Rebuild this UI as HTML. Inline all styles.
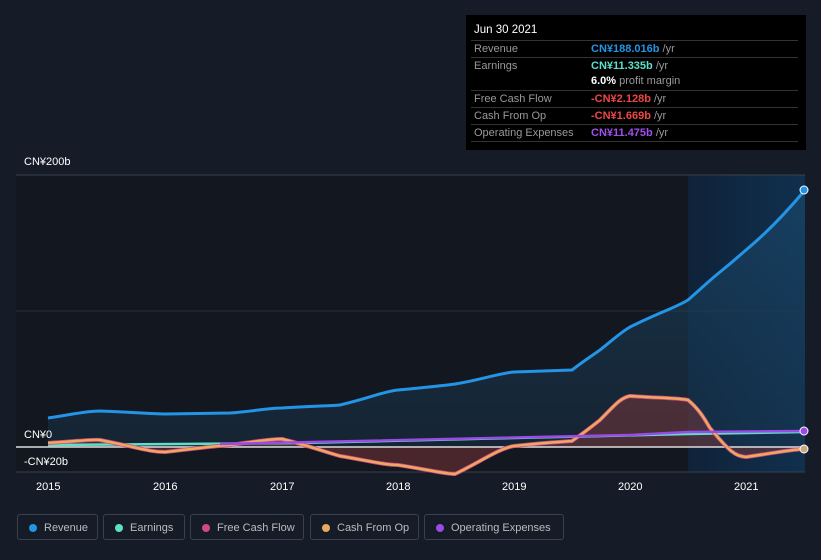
<!DOCTYPE html><html><head><style>
body{margin:0;width:821px;height:560px;background:#161c27;font-family:"Liberation Sans",sans-serif;position:relative;overflow:hidden}
.tt{position:absolute;left:466px;top:15px;width:340px;height:135px;background:#000;color:#ccc;font-size:11px}
.tt .h{position:absolute;left:8px;top:9px;color:#fff;font-size:11.5px}
.r{position:absolute;left:5px;width:327px;border-top:1px solid #333;height:16px;line-height:16px}
.r span{position:absolute;left:3px;color:#999}.r b{position:absolute;left:120px;font-weight:bold}
.r i{font-style:normal;color:#999;font-weight:normal}
.lab{position:absolute;color:#fff;font-size:11px}
.leg{position:absolute;top:514px;height:26px;border:1px solid #3a404c;border-radius:3px;color:#bbb;font-size:11px;line-height:26px;box-sizing:border-box;padding-left:26px}
.leg:before{content:"";position:absolute;left:11px;top:9px;width:8px;height:8px;border-radius:50%;background:var(--c)}
</style></head><body>
<svg width="821" height="560" style="position:absolute;left:0;top:0">
<defs><linearGradient id="rg" x1="0" y1="0" x2="0" y2="1"><stop offset="0" stop-color="#1a4a6e" stop-opacity=".6"/><stop offset="1" stop-color="#1a3850" stop-opacity=".4"/></linearGradient>
<linearGradient id="fg" x1="0" y1="0" x2="1" y2="0"><stop offset="0" stop-color="#0f2238"/><stop offset="1" stop-color="#10304f"/></linearGradient></defs>
<rect x="16" y="175" width="672" height="297" fill="#131720"/>
<rect x="688" y="175" width="117" height="297" fill="url(#fg)"/>
<line x1="16" y1="175" x2="805" y2="175" stroke="#3a404c"/>
<line x1="16" y1="311" x2="805" y2="311" stroke="#2a303c"/>
<line x1="16" y1="472" x2="805" y2="472" stroke="#3a404c"/>
<path d="M48,418 C70,415 85,411 100,411 C130,412 150,414 165,414 L230,413 C255,411 270,408 282,408 C310,406 330,406 340,405 C370,398 385,391 398,390 C430,387 440,386 455,384 C480,380 500,373 514,372 L572,370 C585,360 590,357 600,350 C615,338 620,333 630,327 C660,312 675,308 688,300 C705,285 710,280 720,272 C735,260 740,255 746,250 C770,230 790,208 805,190 L805,447 L48,447Z" fill="url(#rg)"/>
<path d="M48,443 C80,441 95,439 100,440 C140,448 150,452 165,452 C200,448 215,446 230,445 C260,441 270,439 282,439 C310,446 325,452 340,456 C370,461 385,465 398,465 C430,470 445,474 455,474 C480,462 500,448 514,446 C550,442 560,442 572,441 C585,432 590,428 600,420 C615,405 620,398 630,396 C660,398 680,398 688,400 C700,410 705,420 710,428 C730,452 735,456 746,457 C780,452 795,449 805,449 L805,447 L48,447Z" fill="#8a3a3a" fill-opacity=".45"/>
<line x1="16" y1="447" x2="805" y2="447" stroke="#ddd" stroke-width="1.5"/>
<path d="M48,445 L300,443 L514,438 L688,434 L805,432" fill="none" stroke="#5ee0c8" stroke-width="2.5"/>
<path d="M48,443 C80,441 95,439 100,440 C140,448 150,452 165,452 C200,448 215,446 230,445 C260,441 270,439 282,439 C310,446 325,452 340,456 C370,461 385,465 398,465 C430,470 445,474 455,474 C480,462 500,448 514,446 C550,442 560,442 572,441 C585,432 590,428 600,420 C615,405 620,398 630,396 C660,398 680,398 688,400 C700,410 705,420 710,428 C730,452 735,456 746,457 C780,452 795,449 805,449" fill="none" stroke="#d04a80" stroke-width="4"/>
<path d="M48,443 C80,441 95,439 100,440 C140,448 150,452 165,452 C200,448 215,446 230,445 C260,441 270,439 282,439 C310,446 325,452 340,456 C370,461 385,465 398,465 C430,470 445,474 455,474 C480,462 500,448 514,446 C550,442 560,442 572,441 C585,432 590,428 600,420 C615,405 620,398 630,396 C660,398 680,398 688,400 C700,410 705,420 710,428 C730,452 735,456 746,457 C780,452 795,449 805,449" fill="none" stroke="#eaa860" stroke-width="2.5"/>
<path d="M220,444 L630,435 L688,432 L805,431" fill="none" stroke="#9b4ae8" stroke-width="2.5"/>
<path d="M48,418 C70,415 85,411 100,411 C130,412 150,414 165,414 L230,413 C255,411 270,408 282,408 C310,406 330,406 340,405 C370,398 385,391 398,390 C430,387 440,386 455,384 C480,380 500,373 514,372 L572,370 C585,360 590,357 600,350 C615,338 620,333 630,327 C660,312 675,308 688,300 C705,285 710,280 720,272 C735,260 740,255 746,250 C770,230 790,208 805,190" fill="none" stroke="#2394e6" stroke-width="3"/>
<circle cx="804" cy="190" r="4" fill="#2394e6" stroke="#fff" stroke-width="1"/>
<circle cx="804" cy="431" r="4" fill="#9b4ae8" stroke="#fff" stroke-width="1"/>
<circle cx="804" cy="449" r="4" fill="#c8a880" stroke="#fff" stroke-width="1"/>
</svg>
<div class="lab" style="left:24px;top:156px">CN¥200b</div>
<div class="lab" style="left:24px;top:429px">CN¥0</div>
<div class="lab" style="left:24px;top:456px">-CN¥20b</div>
<div class="lab" style="left:36px;top:481px">2015</div><div class="lab" style="left:153px;top:481px">2016</div><div class="lab" style="left:270px;top:481px">2017</div><div class="lab" style="left:386px;top:481px">2018</div><div class="lab" style="left:502px;top:481px">2019</div><div class="lab" style="left:618px;top:481px">2020</div><div class="lab" style="left:734px;top:481px">2021</div>
<div class="tt"><div class="h">Jun 30 2021</div>
<div class="r" style="top:25px"><span>Revenue</span><b style="color:#2394e6">CN¥188.016b <i>/yr</i></b></div>
<div class="r" style="top:42px"><span>Earnings</span><b style="color:#5ee0c8">CN¥11.335b <i>/yr</i></b></div>
<div class="r" style="top:58px;border:0"><b style="color:#fff">6.0% <i>profit margin</i></b></div>
<div class="r" style="top:75px"><span>Free Cash Flow</span><b style="color:#f04545">-CN¥2.128b <i>/yr</i></b></div>
<div class="r" style="top:92px"><span>Cash From Op</span><b style="color:#f04545">-CN¥1.669b <i>/yr</i></b></div>
<div class="r" style="top:109px;border-bottom:1px solid #333"><span>Operating Expenses</span><b style="color:#a050f0">CN¥11.475b <i>/yr</i></b></div>
</div>
<div class="leg" style="left:17px;width:81px;--c:#2394e6">Revenue</div>
<div class="leg" style="left:103px;width:82px;--c:#5ee0c8">Earnings</div>
<div class="leg" style="left:190px;width:114px;--c:#d04a80">Free Cash Flow</div>
<div class="leg" style="left:310px;width:109px;--c:#e8a860">Cash From Op</div>
<div class="leg" style="left:424px;width:140px;--c:#9b4ae8">Operating Expenses</div>
</body></html>
